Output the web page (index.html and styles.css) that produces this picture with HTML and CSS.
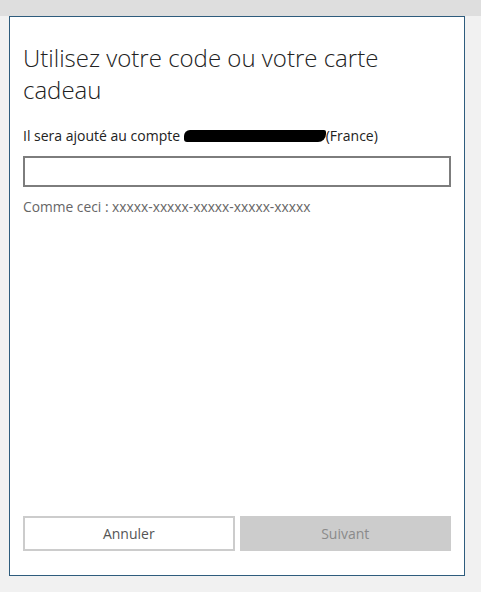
FILE: index.html
```html
<!DOCTYPE html>
<html lang="fr">
<head>
<meta charset="utf-8">
<link rel="stylesheet" href="styles.css">
</head>
<body>
<div class="backdrop">
  <div class="dialog">
    <h1 class="title">Utilisez votre code ou votre carte cadeau</h1>
    <p class="label">Il sera ajouté au compte <span class="redacted"></span>(France)</p>
    <input class="code" type="text">
    <p class="hint">Comme ceci : xxxxx-xxxxx-xxxxx-xxxxx-xxxxx</p>
    <div class="spacer"></div>
    <div class="actions">
      <button class="btn btn-cancel">Annuler</button>
      <button class="btn btn-next" disabled>Suivant</button>
    </div>
  </div>
</div>
</body>
</html>
```
FILE: styles.css
```css
html, body {
  margin: 0;
  padding: 0;
}
body {
  width: 481px;
  height: 592px;
  background: linear-gradient(#dedede 0, #dedede 16px, #f1f1f1 16px);
  font-family: "Open Sans", "Noto Sans", sans-serif;
  overflow: hidden;
}
.backdrop {
  padding: 16px 0 0 9px;
}
.dialog {
  box-sizing: border-box;
  width: 456px;
  height: 560px;
  background: #fff;
  border: 1px solid #2e5c7d;
  padding: 25px 14px 24px 13px;
  display: flex;
  flex-direction: column;
}
.title {
  margin: 0;
  font-weight: 300;
  font-size: 24px;
  line-height: 32px;
  color: #222;
  width: 410px;
}
.label {
  margin: 20px 0 0;
  font-size: 14px;
  line-height: 20px;
  color: #222;
}
.redacted {
  display: inline-block;
  width: 142px;
  height: 12px;
  background: #000;
  border-radius: 6px 2px 8px 3px;
  vertical-align: -1px;
}
.code {
  box-sizing: border-box;
  margin: 10px 0 0;
  width: 428px;
  height: 31px;
  border: 2px solid #7d7d7d;
  background: #fff;
  outline: none;
}
.hint {
  margin: 11px 0 0;
  font-size: 13.8px;
  line-height: 18px;
  color: #666;
}
.spacer {
  flex: 1;
}
.actions {
  display: flex;
  gap: 5px;
  width: 428px;
}
.btn {
  box-sizing: border-box;
  height: 35px;
  flex: 1;
  font-family: "Open Sans", "Noto Sans", sans-serif;
  font-size: 14px;
  padding: 0;
}
.btn-cancel {
  background: #fff;
  border: 2px solid #cccccc;
  color: #555;
}
.btn-next {
  background: #cccccc;
  border: 2px solid #cccccc;
  color: #8a8a8a;
}
```
